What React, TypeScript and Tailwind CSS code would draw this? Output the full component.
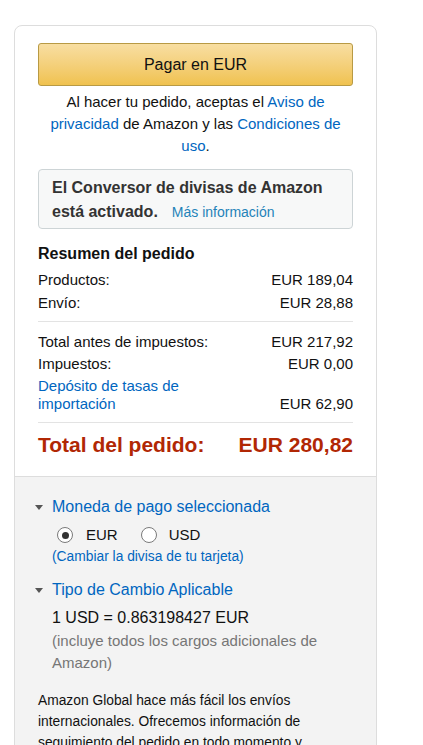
import React from "react";

function Radio({ checked }: { checked?: boolean }) {
  return (
    <span className="flex h-[16px] w-[16px] items-center justify-center rounded-full border border-[#7a7a7a] bg-white">
      {checked && <span className="h-[7px] w-[7px] rounded-full bg-[#333]" />}
    </span>
  );
}

function Caret() {
  return <span className="h-0 w-0 border-x-[4px] border-t-[5px] border-x-transparent border-t-[#555]" />;
}

function Row({ label, value }: { label: string; value: string }) {
  return (
    <div className="flex justify-between text-[15px] leading-[22px] text-[#111]">
      <span>{label}</span>
      <span>{value}</span>
    </div>
  );
}

export default function App() {
  return (
    <div className="min-h-screen bg-white pl-[14px] pt-[25px] font-['Liberation_Sans',Arial,sans-serif]">
      <div className="w-[363px] overflow-hidden rounded-[8px] border border-[#dddddd]">
        <div className="px-[23px] pb-[18px] pt-[17px]">
          <button className="flex h-[43px] w-full items-center justify-center rounded-[3px] border border-[#b89a44] bg-linear-to-b from-[#f8dea1] to-[#f0c24e] text-[16px] text-[#111]">
            Pagar en EUR
          </button>
          <p className="mt-[5px] text-center text-[15px] leading-[22px] text-[#111]">
            Al hacer tu pedido, aceptas el <span className="text-[#0066c0]">Aviso de privacidad</span> de Amazon y las{" "}
            <span className="text-[#0066c0]">Condiciones de uso</span>.
          </p>
          <div className="mt-[12px] rounded-[4px] border border-[#cdd4d6] bg-[#f7f8f8] px-[13px] pb-[4px] pt-[6px] text-[16px] font-bold leading-[24px] text-[#333]">
            El Conversor de divisas de Amazon está activado.
            <span className="ml-[14px] text-[14px] font-normal text-[#1f83b9]">Más información</span>
          </div>
          <div className="mt-[13px] text-[16px] font-bold leading-[24px] text-[#111]">Resumen del pedido</div>
          <div className="mt-[2px] flex justify-between text-[15px] leading-[23px] text-[#111]">
            <span>Productos:</span>
            <span>EUR 189,04</span>
          </div>
          <div className="flex justify-between text-[15px] leading-[23px] text-[#111]">
            <span>Envío:</span>
            <span>EUR 28,88</span>
          </div>
          <div className="mt-[7px] h-px bg-[#e3e3e3]" />
          <div className="mt-[9px]">
            <Row label="Total antes de impuestos:" value="EUR 217,92" />
            <Row label="Impuestos:" value="EUR 0,00" />
          </div>
          <div className="mt-[2px] flex items-end justify-between text-[15px] leading-[18px]">
            <span className="w-[180px] text-[#0066c0]">Depósito de tasas de importación</span>
            <span className="text-[#111]">EUR 62,90</span>
          </div>
          <div className="mt-[9px] h-px bg-[#e3e3e3]" />
          <div className="mt-[9px] flex justify-between text-[21px] font-bold leading-[26px] text-[#b12704]">
            <span>Total del pedido:</span>
            <span>EUR 280,82</span>
          </div>
        </div>
        <div className="border-t border-[#dddddd] bg-[#f3f3f3] pl-[20px] pr-[20px] pt-[19px] pb-[10px]">
          <div className="flex items-center text-[16px] leading-[22px] text-[#0066c0]">
            <Caret />
            <span className="ml-[9px]">Moneda de pago seleccionada</span>
          </div>
          <div className="pl-[17px]">
            <div className="mt-[6px] flex items-center pl-[5px] text-[15px] leading-[22px] text-[#111]">
              <Radio checked />
              <span className="ml-[13px]">EUR</span>
              <span className="ml-[23px]">
                <Radio />
              </span>
              <span className="ml-[12px]">USD</span>
            </div>
            <div className="mt-[2px] text-[13.8px] leading-[18px] text-[#0066c0]">(Cambiar la divisa de tu tarjeta)</div>
          </div>
          <div className="mt-[13px] flex items-center text-[16px] leading-[22px] text-[#0066c0]">
            <Caret />
            <span className="ml-[9px]">Tipo de Cambio Aplicable</span>
          </div>
          <div className="pl-[17px]">
            <div className="mt-[6px] text-[16px] leading-[22px] text-[#111]">1 USD = 0.863198427 EUR</div>
            <div className="mt-[1px] text-[15px] leading-[22px] text-[#767676]">(incluye todos los cargos adicionales de Amazon)</div>
          </div>
          <p className="ml-[3px] mt-[16px] w-[315px] text-[13.8px] leading-[21px] text-[#111]">
            Amazon Global hace más fácil los envíos internacionales. Ofrecemos información de seguimiento del pedido en todo
            momento y atención al cliente en tu idioma.
          </p>
        </div>
      </div>
    </div>
  );
}
